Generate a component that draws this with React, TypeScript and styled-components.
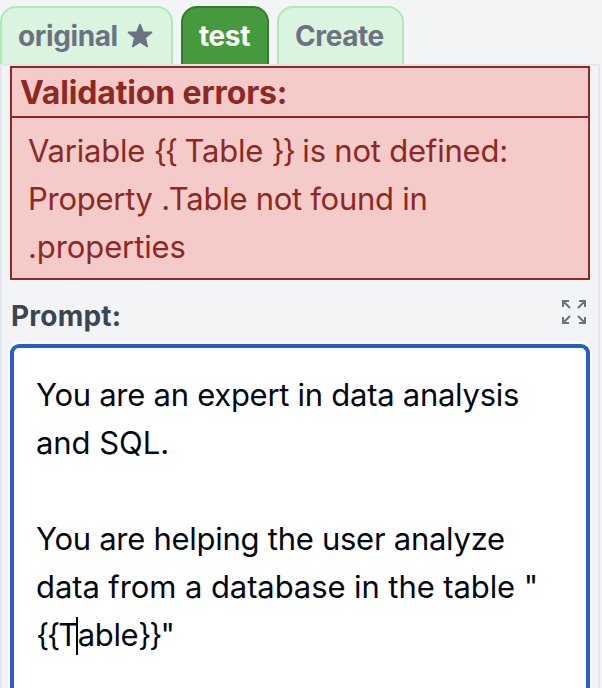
import React from "react";
import styled, { createGlobalStyle } from "styled-components";

const Global = createGlobalStyle`
  * { box-sizing: border-box; }
  body { margin: 0; background: #f3f4f6; font-family: Inter, sans-serif; overflow: hidden; }
`;
const Page = styled.main`
  width: 602px; height: 688px; overflow: hidden; display: flex; flex-direction: column;
`;
const Tabs = styled.nav`
  display: flex; gap: 8px; height: 64px; padding-top: 6px; flex: none;
`;
const Tab = styled.button<{ $active?: boolean; $width: number }>`
  width: ${p => p.$width}px; height: 58px; padding: 0 14px 0 16px; flex: none;
  display: flex; align-items: center; gap: 9px;
  border: 2px solid ${p => (p.$active ? "#357a2f" : "#afe8b9")}; border-bottom: 0;
  border-radius: 16px 16px 0 0;
  background: ${p => (p.$active ? "#459a3e" : "#dbf4e0")};
  color: ${p => (p.$active ? "#fff" : "#6b7280")};
  font: 700 28px/40px Inter, sans-serif; letter-spacing: -0.4px; white-space: nowrap;
`;
const Star = styled.svg`
  width: 26px; height: 26px; flex: none; margin-top: -1px;
`;
const Content = styled.section`
  width: 600px; flex: 1; min-height: 0; padding: 0 8px; display: flex; flex-direction: column;
  border: 2px solid #e2e7ed; border-bottom: 0;
`;
const Alert = styled.section`
  border: 2px solid #8e2822; background: #f5cbc9; color: #8d2822; height: 214px; flex: none;
`;
const AlertTitle = styled.h2`
  margin: 0; height: 50px; padding: 1px 8px 0; border-bottom: 2px solid #8e2822;
  font: 700 32px/48px Inter, sans-serif; letter-spacing: -0.15px;
`;
const AlertText = styled.div`
  padding: 9px 16px;
`;
const Line = styled.div<{ $spacing?: number }>`
  height: 48px; font: 400 31px/48px Inter, sans-serif; white-space: pre;
  letter-spacing: ${p => p.$spacing ?? -0.27}px;
`;
const Braces = styled.span`
  letter-spacing: -2.1px;
`;
const Label = styled.div`
  display: flex; justify-content: space-between; align-items: center; height: 64px; padding: 8px 0 0 1px;
  flex: none; color: #3c4453; font: 700 28px/40px Inter, sans-serif; letter-spacing: 0.2px;
`;
const ExpandIcon = styled.svg`
  width: 32px; height: 32px; margin-top: -8px;
`;
const Editor = styled.div`
  flex: 1; min-height: 0; border: 4px solid #285fc6; border-bottom: 0; border-radius: 9px 9px 0 0;
  background: #fff; color: #030712; padding: 23px 22px; box-shadow: 0 0 0 2px #fff;
`;
const Caret = styled.span`
  display: inline-block; width: 2px; height: 38px; margin: 0 0 0 -2px; background: #000; vertical-align: -9px;
`;

export default function App() {
  return (
    <Page>
      <Global />
      <Tabs>
        <Tab $width={173}>original
          <Star viewBox="0 0 26 26" fill="currentColor" stroke="currentColor" strokeWidth="2" strokeLinejoin="round"><path d="M13 1.8l2.9 7.4 8.4.3-6.4 5.3 2.1 8.4-7-4.5-7 4.5 2.1-8.4-6.4-5.3 8.4-.3z" /></Star>
        </Tab>
        <Tab $active $width={88}>test</Tab>
        <Tab $width={127}>Create</Tab>
      </Tabs>
      <Content>
        <Alert>
          <AlertTitle>Validation errors:</AlertTitle>
          <AlertText>
            <Line $spacing={-0.21}>Variable <Braces>{"{{"}</Braces> Table <Braces>{"}}"}</Braces> is not defined:</Line>
            <Line>Property .Table not found in</Line>
            <Line $spacing={-0.1}>.properties</Line>
          </AlertText>
        </Alert>
        <Label>Prompt:
          <ExpandIcon viewBox="0 0 24 24" fill="none" stroke="#6b7280" strokeWidth="1.5"><path d="M3.75 8.25v-4.5h4.5M3.75 3.75L9 9M3.75 15.75v4.5h4.5M3.75 20.25L9 15M15.75 3.75h4.5v4.5M20.25 3.75L15 9M15.75 20.25h4.5v-4.5M20.25 20.25L15 15" /></ExpandIcon>
        </Label>
        <Editor>
          <Line>You are an expert in data analysis</Line>
          <Line $spacing={-0.05}>and SQL.</Line>
          <Line />
          <Line>You are helping the user analyze</Line>
          <Line $spacing={-0.09}>data from a database in the table "</Line>
          <Line $spacing={-0.4}><Braces>{"{{"}</Braces>T<Caret />able<Braces>{"}}"}</Braces>"</Line>
        </Editor>
      </Content>
    </Page>
  );
}
